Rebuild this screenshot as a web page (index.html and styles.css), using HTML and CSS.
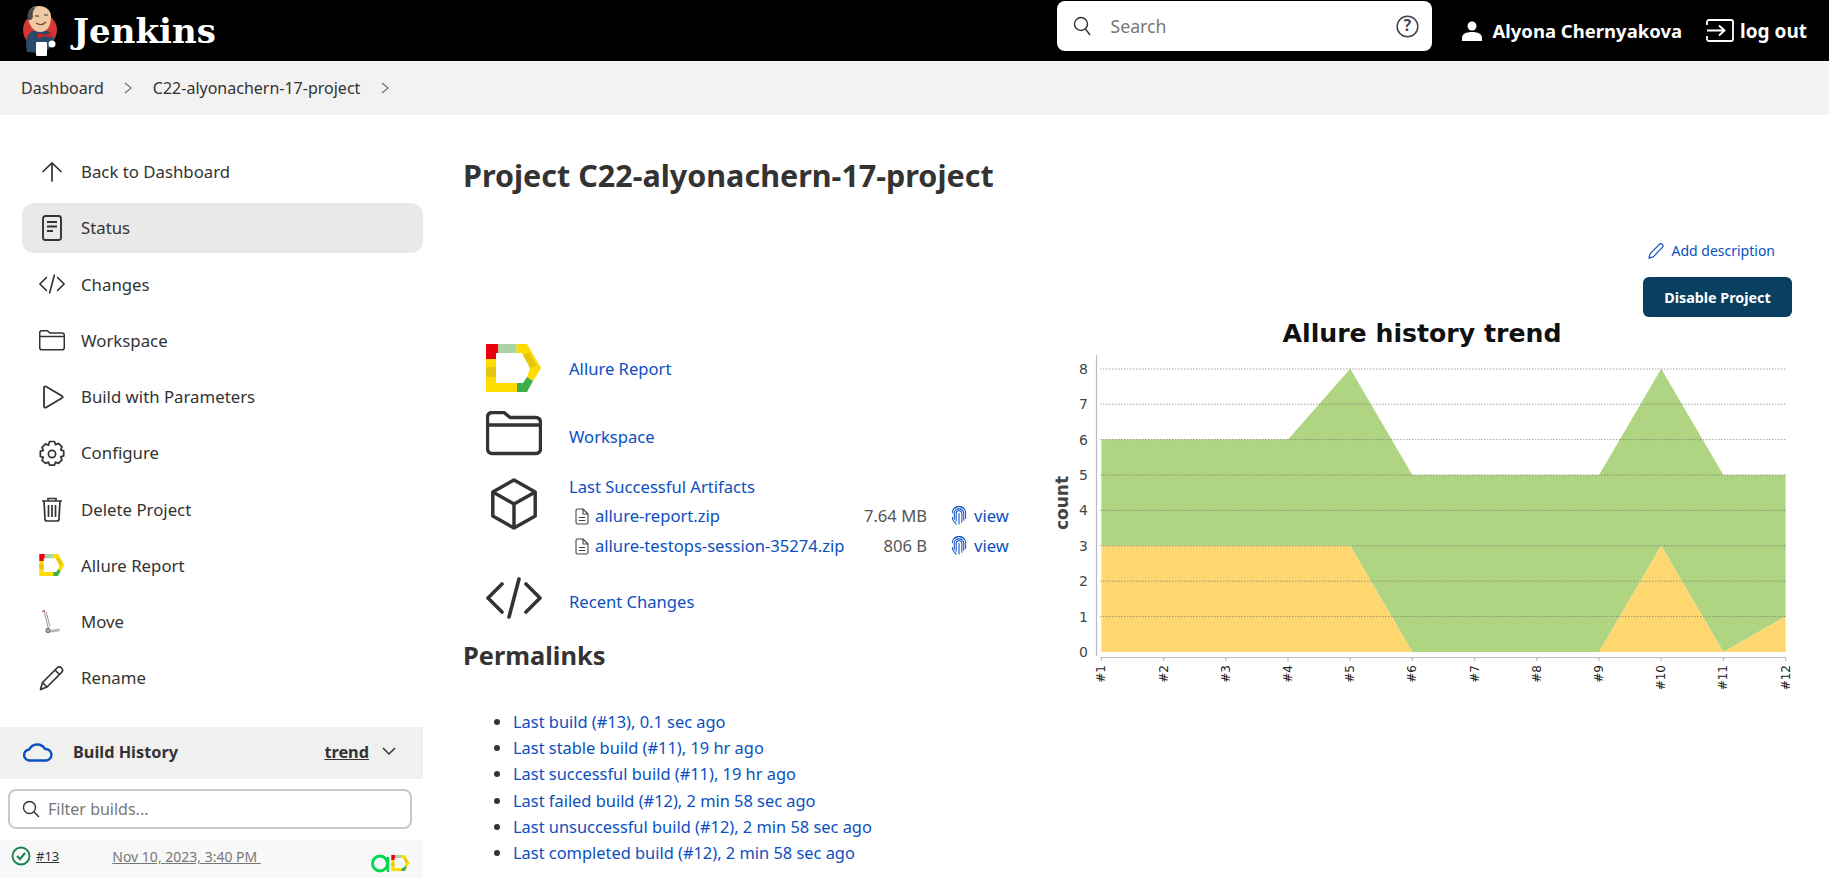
FILE: index.html
```html
<!DOCTYPE html>
<html lang="en">
<head>
    <meta charset="UTF-8">
    <meta name="viewport" content="width=device-width, initial-scale=1.0">
    <title>C22-alyonachern-17-project [Jenkins]</title>
    <link rel="stylesheet" href="styles.css">
</head>
<body>
    <svg class="defs" aria-hidden="true">
        <symbol id="allure" viewBox="0 0 56 48">
            <polygon fill="#ffdc00" points="0,15 10,15 10,39 31,39 31,48 0,48"/>
            <polygon fill="#e6c60d" points="0,23 10,23 10,33 0,33"/>
            <polygon fill="#e8000f" points="0,0 12.4,0 12.4,9 10,9 10,15 0,15"/>
            <polygon fill="#a8d5a2" points="12.4,0 30.5,0 30.5,9 12.4,9"/>
            <polygon fill="#ffdc00" points="30.5,0 41,0 55,24 47,37 41,33 44,24 36,9 30.5,9"/>
            <polygon fill="#e6c60d" points="37,11 43,8 51,22 44,24"/>
            <polygon fill="#3fae49" points="31,48 31,39 37,39 41,33 47,37 41,48"/>
        </symbol>
        <symbol id="folder" viewBox="0 0 56 45">
            <path d="M1.500 6a4.500 4.500 0 0 1 4.500-4.500h12l6 5h26a4.500 4.500 0 0 1 4.500 4.500v27a4.500 4.500 0 0 1-4.500 4.500H6A4.500 4.500 0 0 1 1.500 38zM1.500 14h53" fill="none" stroke="currentColor" stroke-width="3.400" stroke-linejoin="round"/>
        </symbol>
        <symbol id="code" viewBox="0 0 56 42">
            <path d="M16 7 2 21l14 14M40 7l14 14-14 14M33 2l-10 38" fill="none" stroke="currentColor" stroke-width="3.600" stroke-linecap="round" stroke-linejoin="round"/>
        </symbol>
        <symbol id="doc" viewBox="0 0 14 17">
            <path d="M1 2.500A1.500 1.500 0 0 1 2.500 1h5.500L13 6v8.500a1.500 1.500 0 0 1-1.500 1.500h-9A1.500 1.500 0 0 1 1 14.500zM8 1v5h5M3.800 9.500h6.400M3.800 12.500h6.400" fill="none" stroke="#444" stroke-width="1.100" stroke-linejoin="round"/>
        </symbol>
        <symbol id="print" viewBox="0 0 16 21">
            <g fill="none" stroke="#0b50c0" stroke-width="1.100" stroke-linecap="round">
                <path d="M1 7a7 6.500 0 0 1 14 0v6"/>
                <path d="M3 2.500a8 8 0 0 1 10 0"/>
                <path d="M3 14V7.500a5 4.500 0 0 1 10 0V15"/>
                <path d="M5 16V8a3 3 0 0 1 6 0v9"/>
                <path d="M8 8v11"/>
                <path d="M1 12c0 3 2 5 4 7"/>
            </g>
        </symbol>
    </svg>

    <header class="topbar">
        <a class="brand" href="#">
            <svg class="butler" viewBox="0 0 36 50" width="36" height="50">
                <circle cx="18" cy="24" r="17" fill="#d33833"/>
                <path d="M5 46c-2-8-1-17 5-21h16c5 3 6 8 5 13l-5 6-8 3z" fill="#2a4a6b"/>
                <path d="M6 10C6 3 11 0 17 0c7 0 12 4 12 11 0 8-3 15-11 15C11 26 6 18 6 10z" fill="#f0c8a4"/>
                <path d="M6 14C4 7 8 1 14 1c-3 3-4 6-3 10l-2 3z" fill="#4a4a4a"/>
                <path d="M14 17c3 2 7 2 10-1" fill="none" stroke="#7a4a2a" stroke-width="1.300"/>
                <path d="M13 10h4M22 9h4" stroke="#333" stroke-width="1.200"/>
                <path d="M16 27l7 2 7-3v6l-7-2-7 2z" fill="#d8231f"/>
                <rect x="14" y="36" width="11" height="14" rx="1" fill="#fff"/>
                <circle cx="30" cy="38" r="3.500" fill="#fff"/>
            </svg>
            <span class="brand-name">Jenkins</span>
        </a>
        <div class="search">
            <svg class="search-icon" viewBox="0 0 18 20" width="18" height="20"><circle cx="8" cy="8" r="6.500" fill="none" stroke="#333" stroke-width="1.400"/><path d="M12.500 13l4.500 6" stroke="#333" stroke-width="1.400"/></svg>
            <span class="search-text">Search</span>
            <svg class="help-icon" viewBox="0 0 24 24" width="23" height="23"><circle cx="12" cy="12" r="10.800" fill="none" stroke="#444" stroke-width="1.600"/><text x="12" y="17" class="help-mark">?</text></svg>
        </div>
        <a class="top-link user" href="#">
            <svg viewBox="0 0 20 20" width="20" height="20"><circle cx="10" cy="5" r="4.500" fill="#fff"/><path d="M0 20v-3c0-4 4-6 10-6s10 2 10 6v3z" fill="#fff"/></svg>
            Alyona Chernyakova
        </a>
        <a class="top-link logout" href="#">
            <svg viewBox="0 0 28 23" width="28" height="23"><path d="M1 6V3a2 2 0 0 1 2-2h22a2 2 0 0 1 2 2v17a2 2 0 0 1-2 2H3a2 2 0 0 1-2-2v-3M1 11.500h17M13 6.500l5.500 5-5.500 5" fill="none" stroke="#fff" stroke-width="1.800"/></svg>
            log out
        </a>
    </header>

    <nav class="crumbs">
        <a href="#">Dashboard</a>
        <svg class="chevron" viewBox="0 0 8 12" width="8" height="12"><path d="M1 1l6 5-6 5" fill="none" stroke="#777" stroke-width="1.300"/></svg>
        <a href="#">C22-alyonachern-17-project</a>
        <svg class="chevron" viewBox="0 0 8 12" width="8" height="12"><path d="M1 1l6 5-6 5" fill="none" stroke="#777" stroke-width="1.300"/></svg>
    </nav>

    <div class="page">
        <aside class="sidebar">
            <ul class="tasks">
                <li class="task">
                    <span class="task-icon"><svg viewBox="0 0 26 26" width="26" height="26"><path d="M13 22V4M4 12.500L13 4l9 8.500" fill="none" stroke="currentColor" stroke-width="1.700" stroke-linecap="round"/></svg></span>
                    Back to Dashboard
                </li>
                <li class="task active">
                    <span class="task-icon"><svg viewBox="0 0 26 26" width="26" height="26"><rect x="4" y="1" width="18" height="24" rx="2.500" fill="none" stroke="currentColor" stroke-width="1.900"/><path d="M8 7h10M8 11.500h10M8 16h6" stroke="currentColor" stroke-width="1.900"/></svg></span>
                    Status
                </li>
                <li class="task">
                    <span class="task-icon"><svg viewBox="0 0 56 42" width="26" height="20"><use href="#code"/></svg></span>
                    Changes
                </li>
                <li class="task">
                    <span class="task-icon"><svg viewBox="0 0 56 45" width="26" height="21"><use href="#folder"/></svg></span>
                    Workspace
                </li>
                <li class="task">
                    <span class="task-icon"><svg viewBox="0 0 26 26" width="26" height="26"><path d="M5 3.500c0-1 1-1.500 2-1L23 12c1 .5 1 1.500 0 2L7 23.500c-1 .5-2 0-2-1z" fill="none" stroke="currentColor" stroke-width="1.800" stroke-linejoin="round"/></svg></span>
                    Build with Parameters
                </li>
                <li class="task">
                    <span class="task-icon"><svg viewBox="0 0 26 26" width="26" height="26"><path d="M10.500 1.500h5l1 3.200 3-1.300 3.500 3.500-1.300 3 3 1v5l-3 1 1.300 3-3.500 3.500-3-1.300-1 3h-5l-1-3-3 1.300L3 20.400l1.300-3-3-1v-5l3-1L3 7.400l3.500-3.500 3 1.300z" fill="none" stroke="currentColor" stroke-width="1.700" stroke-linejoin="round"/><circle cx="13" cy="14" r="3.600" fill="none" stroke="currentColor" stroke-width="1.700"/></svg></span>
                    Configure
                </li>
                <li class="task">
                    <span class="task-icon"><svg viewBox="0 0 26 26" width="26" height="26"><path d="M3 5h20M9 5V2.500h8V5M5 5l1 18c0 1 1 2 2 2h10c1 0 2-1 2-2l1-18M9.500 9v12M13 9v12M16.500 9v12" fill="none" stroke="currentColor" stroke-width="1.700"/></svg></span>
                    Delete Project
                </li>
                <li class="task">
                    <span class="task-icon"><svg viewBox="0 0 56 48" width="26" height="22"><use href="#allure"/></svg></span>
                    Allure Report
                </li>
                <li class="task">
                    <span class="task-icon"><svg viewBox="0 0 26 26" width="26" height="26"><path d="M3 2.500l3-1" stroke="#c0392b" stroke-width="1.200"/><path d="M5 2l4.500 18M7 2.500l4 15" stroke="#8a8a8a" stroke-width=".9"/><path d="M11 21l10-1.500-1 3-9 1z" fill="#b5b5b5"/><circle cx="9" cy="21.500" r="2.200" fill="#aaa" stroke="#555" stroke-width=".8"/></svg></span>
                    Move
                </li>
                <li class="task">
                    <span class="task-icon"><svg viewBox="0 0 26 26" width="26" height="26"><path d="M1.500 24.500l2-7L18 3c1.500-1.500 3-1.500 4.500 0s1.500 3 0 4.500L8 22zM3.500 17.500L8 22M16 5l5 5" fill="none" stroke="currentColor" stroke-width="1.700" stroke-linejoin="round"/></svg></span>
                    Rename
                </li>
            </ul>

            <section class="history">
                <div class="history-head">
                    <svg viewBox="0 0 30 20" width="30" height="20"><path d="M7 18.500a5.500 5.500 0 0 1-.8-11A9 9 0 0 1 22 7a5.800 5.800 0 0 1 1.500 11.500z" fill="none" stroke="#0b50c0" stroke-width="2.400" stroke-linejoin="round"/></svg>
                    <span class="history-title">Build History</span>
                    <a class="trend" href="#">trend</a>
                    <svg viewBox="0 0 14 9" width="14" height="9"><path d="M1 1l6 6 6-6" fill="none" stroke="#333" stroke-width="1.500"/></svg>
                </div>
                <div class="filter">
                    <svg viewBox="0 0 18 18" width="18" height="18"><circle cx="7.500" cy="7.500" r="6" fill="none" stroke="#333" stroke-width="1.400"/><path d="M12 12l5 5" stroke="#333" stroke-width="1.400"/></svg>
                    <span>Filter builds...</span>
                </div>
                <div class="build">
                    <svg class="build-ok" viewBox="0 0 20 20" width="20" height="20"><circle cx="10" cy="10" r="8.500" fill="none" stroke="#138347" stroke-width="1.800"/><path d="M6 10l3 3 5-6" fill="none" stroke="#138347" stroke-width="2"/></svg>
                    <a class="build-num" href="#">#13</a>
                    <a class="build-date" href="#">Nov 10, 2023, 3:40 PM&nbsp;</a>
                    <svg class="build-badge" viewBox="0 0 21 21" width="21" height="21"><circle cx="10" cy="10.500" r="7.500" fill="none" stroke="#00d84f" stroke-width="3"/><path d="M18 4v15" stroke="#00d84f" stroke-width="2.500"/></svg>
                    <svg viewBox="0 0 56 48" width="19" height="16"><use href="#allure"/></svg>
                </div>
            </section>
        </aside>

        <main class="content">
            <h1>Project C22-alyonachern-17-project</h1>
            <div class="actions">
                <a class="add-desc" href="#">
                    <svg viewBox="0 0 18 18" width="17" height="17"><path d="M1 17l1.200-4.500L12 2.500c1-1 2.200-1 3.200 0s1 2.200 0 3.200L5.500 15.800z" fill="none" stroke="#0b50c0" stroke-width="1.300" stroke-linejoin="round"/></svg>
                    Add description
                </a>
                <button class="disable">Disable Project</button>
            </div>
            <div class="columns">
                <div class="links">
                    <div class="link-row first">
                        <svg class="big-icon" viewBox="0 0 56 48" width="56" height="48"><use href="#allure"/></svg>
                        <a href="#">Allure Report</a>
                    </div>
                    <div class="link-row workspace">
                        <svg class="big-icon" viewBox="0 0 56 45" width="56" height="45"><use href="#folder"/></svg>
                        <a class="low" href="#">Workspace</a>
                    </div>
                    <div class="link-row artifacts">
                        <svg class="big-icon cube" viewBox="0 0 56 56" width="56" height="54"><path d="M28 3l22 12.500v25L28 53 6 40.500v-25zM6 15.500L28 28l22-12.500M28 28v25" fill="none" stroke="currentColor" stroke-width="3.600" stroke-linejoin="round"/></svg>
                        <div class="artifact-box">
                            <a href="#">Last Successful Artifacts</a>
                            <div class="artifact-table">
                                <svg viewBox="0 0 14 17" width="14" height="17"><use href="#doc"/></svg>
                                <a class="file" href="#">allure-report.zip</a>
                                <span class="size">7.64 MB</span>
                                <svg class="print" viewBox="0 0 16 21" width="16" height="20"><use href="#print"/></svg>
                                <a class="view" href="#">view</a>
                                <svg viewBox="0 0 14 17" width="14" height="17"><use href="#doc"/></svg>
                                <a class="file" href="#">allure-testops-session-35274.zip</a>
                                <span class="size">806 B</span>
                                <svg class="print" viewBox="0 0 16 21" width="16" height="20"><use href="#print"/></svg>
                                <a class="view" href="#">view</a>
                            </div>
                        </div>
                    </div>
                    <div class="link-row changes">
                        <svg class="big-icon" viewBox="0 0 56 42" width="56" height="42"><use href="#code"/></svg>
                        <a class="low" href="#">Recent Changes</a>
                    </div>
                    <h2>Permalinks</h2>
                    <ul class="permalinks">
                        <li><a href="#">Last build (#13), 0.1 sec ago</a></li>
                        <li><a href="#">Last stable build (#11), 19 hr ago</a></li>
                        <li><a href="#">Last successful build (#11), 19 hr ago</a></li>
                        <li><a href="#">Last failed build (#12), 2 min 58 sec ago</a></li>
                        <li><a href="#">Last unsuccessful build (#12), 2 min 58 sec ago</a></li>
                        <li><a href="#">Last completed build (#12), 2 min 58 sec ago</a></li>
                    </ul>
                </div>

                <svg class="chart" viewBox="1040 317 760 380" width="760" height="380">
                    <text class="chart-title" x="1422" y="342">Allure history trend</text>
                    <polygon fill="#afd583" points="1101.400,439.600 1288,439.600 1350.200,368.800 1412.400,475 1599,475 1661.200,368.800 1723.400,475 1785.600,475 1785.600,616.600 1723.400,652 1661.200,545.800 1599,652 1412.400,652 1350.200,545.800 1101.400,545.800"/>
                    <polygon fill="#ffd771" points="1101.400,545.800 1350.200,545.800 1412.400,652 1599,652 1661.200,545.800 1723.400,652 1785.600,616.600 1785.600,652 1101.400,652"/>
                    <g class="grid">
                        <path d="M1100 369h686M1100 404.200h686M1100 439.600h686M1100 475h686M1100 510.400h686M1100 545.800h686M1100 581.200h686M1100 616.600h686"/>
                    </g>
                    <path class="axis" d="M1096.500 355v301M1101.400 657.500h684.400M1101.400 657v4M1163.600 657v4M1225.800 657v4M1288 657v4M1350.200 657v4M1412.400 657v4M1474.600 657v4M1536.800 657v4M1599 657v4M1661.200 657v4M1723.400 657v4M1785.600 657v4"/>
                    <g class="y-labels">
                        <text x="1088" y="374">8</text>
                        <text x="1088" y="409">7</text>
                        <text x="1088" y="445">6</text>
                        <text x="1088" y="480">5</text>
                        <text x="1088" y="515">4</text>
                        <text x="1088" y="551">3</text>
                        <text x="1088" y="586">2</text>
                        <text x="1088" y="622">1</text>
                        <text x="1088" y="657">0</text>
                    </g>
                    <text class="y-title" transform="translate(1068 503) rotate(-90)">count</text>
                    <g class="x-labels">
                        <text transform="translate(1105.400 665) rotate(-90)">#1</text>
                        <text transform="translate(1167.600 665) rotate(-90)">#2</text>
                        <text transform="translate(1229.800 665) rotate(-90)">#3</text>
                        <text transform="translate(1292 665) rotate(-90)">#4</text>
                        <text transform="translate(1354.200 665) rotate(-90)">#5</text>
                        <text transform="translate(1416.400 665) rotate(-90)">#6</text>
                        <text transform="translate(1478.600 665) rotate(-90)">#7</text>
                        <text transform="translate(1540.800 665) rotate(-90)">#8</text>
                        <text transform="translate(1603 665) rotate(-90)">#9</text>
                        <text transform="translate(1665.200 665) rotate(-90)">#10</text>
                        <text transform="translate(1727.400 665) rotate(-90)">#11</text>
                        <text transform="translate(1789.600 665) rotate(-90)">#12</text>
                    </g>
                </svg>
            </div>
        </main>
    </div>
</body>
</html>
```

FILE: styles.css
```css
html, body {
    margin: 0;
    height: 878px;
    overflow: hidden;
}

body {
    font-family: "Noto Sans", "Open Sans", sans-serif;
    font-size: 15px;
    color: #333;
    background-color: #fff;
}

a {
    color: inherit;
    text-decoration: none;
}

svg {
    flex: none;
}

.defs {
    display: none;
}

/* top bar */
.topbar {
    display: flex;
    align-items: center;
    height: 61px;
    background-color: #000;
    color: #fff;
}

.brand {
    display: flex;
    align-items: center;
    gap: 15px;
    margin-left: 22px;
    margin-right: auto;
}

.brand-name {
    font-family: "DejaVu Serif", serif;
    font-size: 34px;
    font-weight: bold;
}

.search {
    display: flex;
    align-items: center;
    width: 375px;
    height: 50px;
    margin-top: -9px;
    padding: 0 13px 0 16px;
    box-sizing: border-box;
    background-color: #fff;
    border-radius: 8px;
    color: #777;
    font-size: 17.700px;
}

.search-text {
    margin-left: 19px;
    margin-right: auto;
}

.help-mark {
    font-size: 16px;
    font-weight: bold;
    fill: #444;
    text-anchor: middle;
}

.top-link {
    display: flex;
    align-items: center;
    gap: 10px;
    font-size: 18.500px;
    font-weight: bold;
}

.user {
    margin-left: 30px;
}

.logout {
    gap: 6px;
    margin-left: 24px;
    margin-right: 22px;
    font-size: 19px;
}

/* breadcrumb */
.crumbs {
    display: flex;
    align-items: center;
    gap: 20.500px;
    height: 54px;
    padding-left: 21px;
    background-color: #f2f2f2;
    font-size: 16px;
}

/* layout */
.page {
    display: flex;
}

.sidebar {
    flex: none;
    width: 423px;
    padding-top: 32px;
}

.tasks {
    display: flex;
    flex-direction: column;
    gap: 6.250px;
    margin: 0 0 24px 22px;
    padding: 0;
    list-style: none;
}

.task {
    display: flex;
    align-items: center;
    gap: 16px;
    height: 50px;
    padding: 0 0 1px 17px;
    box-sizing: border-box;
    border-radius: 12px;
    font-size: 16.800px;
}

.task.active {
    background-color: #e9e9e9;
}

.task-icon {
    display: flex;
    justify-content: center;
    width: 26px;
}

/* build history */
.history-head {
    display: flex;
    align-items: center;
    height: 52px;
    padding: 0 27px 3px 23px;
    box-sizing: border-box;
    background-color: #f0f0f0;
    font-size: 16.300px;
    font-weight: bold;
}

.history-title {
    margin-left: 20px;
    margin-right: auto;
}

.trend {
    margin-right: 13px;
    text-decoration: underline;
}

.filter {
    display: flex;
    align-items: center;
    gap: 8px;
    width: 404px;
    height: 40px;
    margin: 10px 0 11px 8px;
    padding-left: 12px;
    box-sizing: border-box;
    border: 2px solid #c3ccd1;
    border-radius: 8px;
    color: #777;
    font-size: 16px;
}

.build {
    display: flex;
    align-items: flex-start;
    height: 38px;
    padding-left: 11px;
    padding-top: 6px;
    box-sizing: border-box;
    background-color: #f8f8f8;
    font-size: 14px;
}

.build-num {
    margin-left: 5px;
    margin-top: 1px;
    font-size: 13px;
    text-decoration: underline;
}

.build-date {
    margin-left: 53px;
    margin-top: 1px;
    margin-right: auto;
    color: #777;
    text-decoration: underline;
}

.build-badge {
    margin-top: 7px;
}

.build svg:last-child {
    margin-top: 9px;
    margin-right: 13px;
}

/* main column */
.content {
    flex: 1;
    min-width: 0;
    margin-left: 41px;
    padding-right: 37px;
}

h1 {
    margin: 0 0 0 -1px;
    padding-top: 37px;
    padding-bottom: 1px;
    font-size: 30.500px;
    line-height: 46px;
    font-weight: bold;
}

.actions {
    display: flex;
    flex-direction: column;
    align-items: flex-end;
    gap: 17px;
    margin-top: 42px;
}

.add-desc {
    display: flex;
    align-items: center;
    gap: 6px;
    margin-right: 17px;
    color: #0b50c0;
    font-size: 14px;
}

.disable {
    width: 149px;
    height: 40px;
    border: none;
    border-radius: 6px;
    background-color: #093f60;
    color: #fff;
    font-family: inherit;
    font-size: 14.300px;
    font-weight: bold;
}

.columns {
    display: flex;
}

.links {
    flex: none;
    width: 576px;
    color: #0b50c0;
    font-size: 16.600px;
}

.link-row {
    display: flex;
    align-items: center;
    gap: 27px;
    margin-left: 22px;
}

.link-row .big-icon {
    color: #333;
}

.first {
    margin-top: 27px;
}

.workspace {
    margin-top: 19px;
}

.low {
    padding-top: 7px;
}

.workspace .low {
    padding-top: 5px;
}

.artifacts {
    align-items: flex-start;
    margin-top: 19px;
}

.cube {
    margin-top: 2px;
}

.artifact-box {
    line-height: 24px;
}

.artifact-table {
    display: grid;
    grid-template-columns: 14px 281px 57px 40px auto;
    grid-auto-rows: 30px;
    align-items: center;
    margin: 2px 0 0 6px;
}

.file {
    margin-left: 6px;
    white-space: nowrap;
}

.print {
    margin-left: 24px;
}

.view {
    margin-left: 7px;
}

.size {
    justify-self: end;
    color: #555;
    white-space: nowrap;
}

.changes {
    margin-top: 16px;
}

h2 {
    margin: 18px 0 0 -1px;
    color: #333;
    font-size: 25.400px;
    line-height: 36px;
    font-weight: bold;
}

.permalinks {
    margin: 36px 0 0;
    padding-left: 49px;
    font-size: 16.400px;
    line-height: 26.200px;
}

.permalinks li::marker {
    color: #333;
}

/* chart */
.chart-title {
    font-family: "DejaVu Sans", sans-serif;
    font-size: 25.200px;
    font-weight: bold;
    fill: #111;
    text-anchor: middle;
}

.grid path {
    fill: none;
    stroke: #666;
    stroke-opacity: .6;
    stroke-dasharray: 1.500 1.500;
}

.axis {
    fill: none;
    stroke: #bbb;
    stroke-width: 1.200;
}

.y-labels text {
    font-family: "DejaVu Sans", sans-serif;
    font-size: 14px;
    fill: #444;
    text-anchor: end;
}

.y-title {
    font-family: "DejaVu Sans", sans-serif;
    font-size: 17px;
    font-weight: bold;
    fill: #444;
    text-anchor: middle;
}

.x-labels text {
    font-family: "DejaVu Sans", sans-serif;
    font-size: 12px;
    fill: #222;
    text-anchor: end;
}
```
